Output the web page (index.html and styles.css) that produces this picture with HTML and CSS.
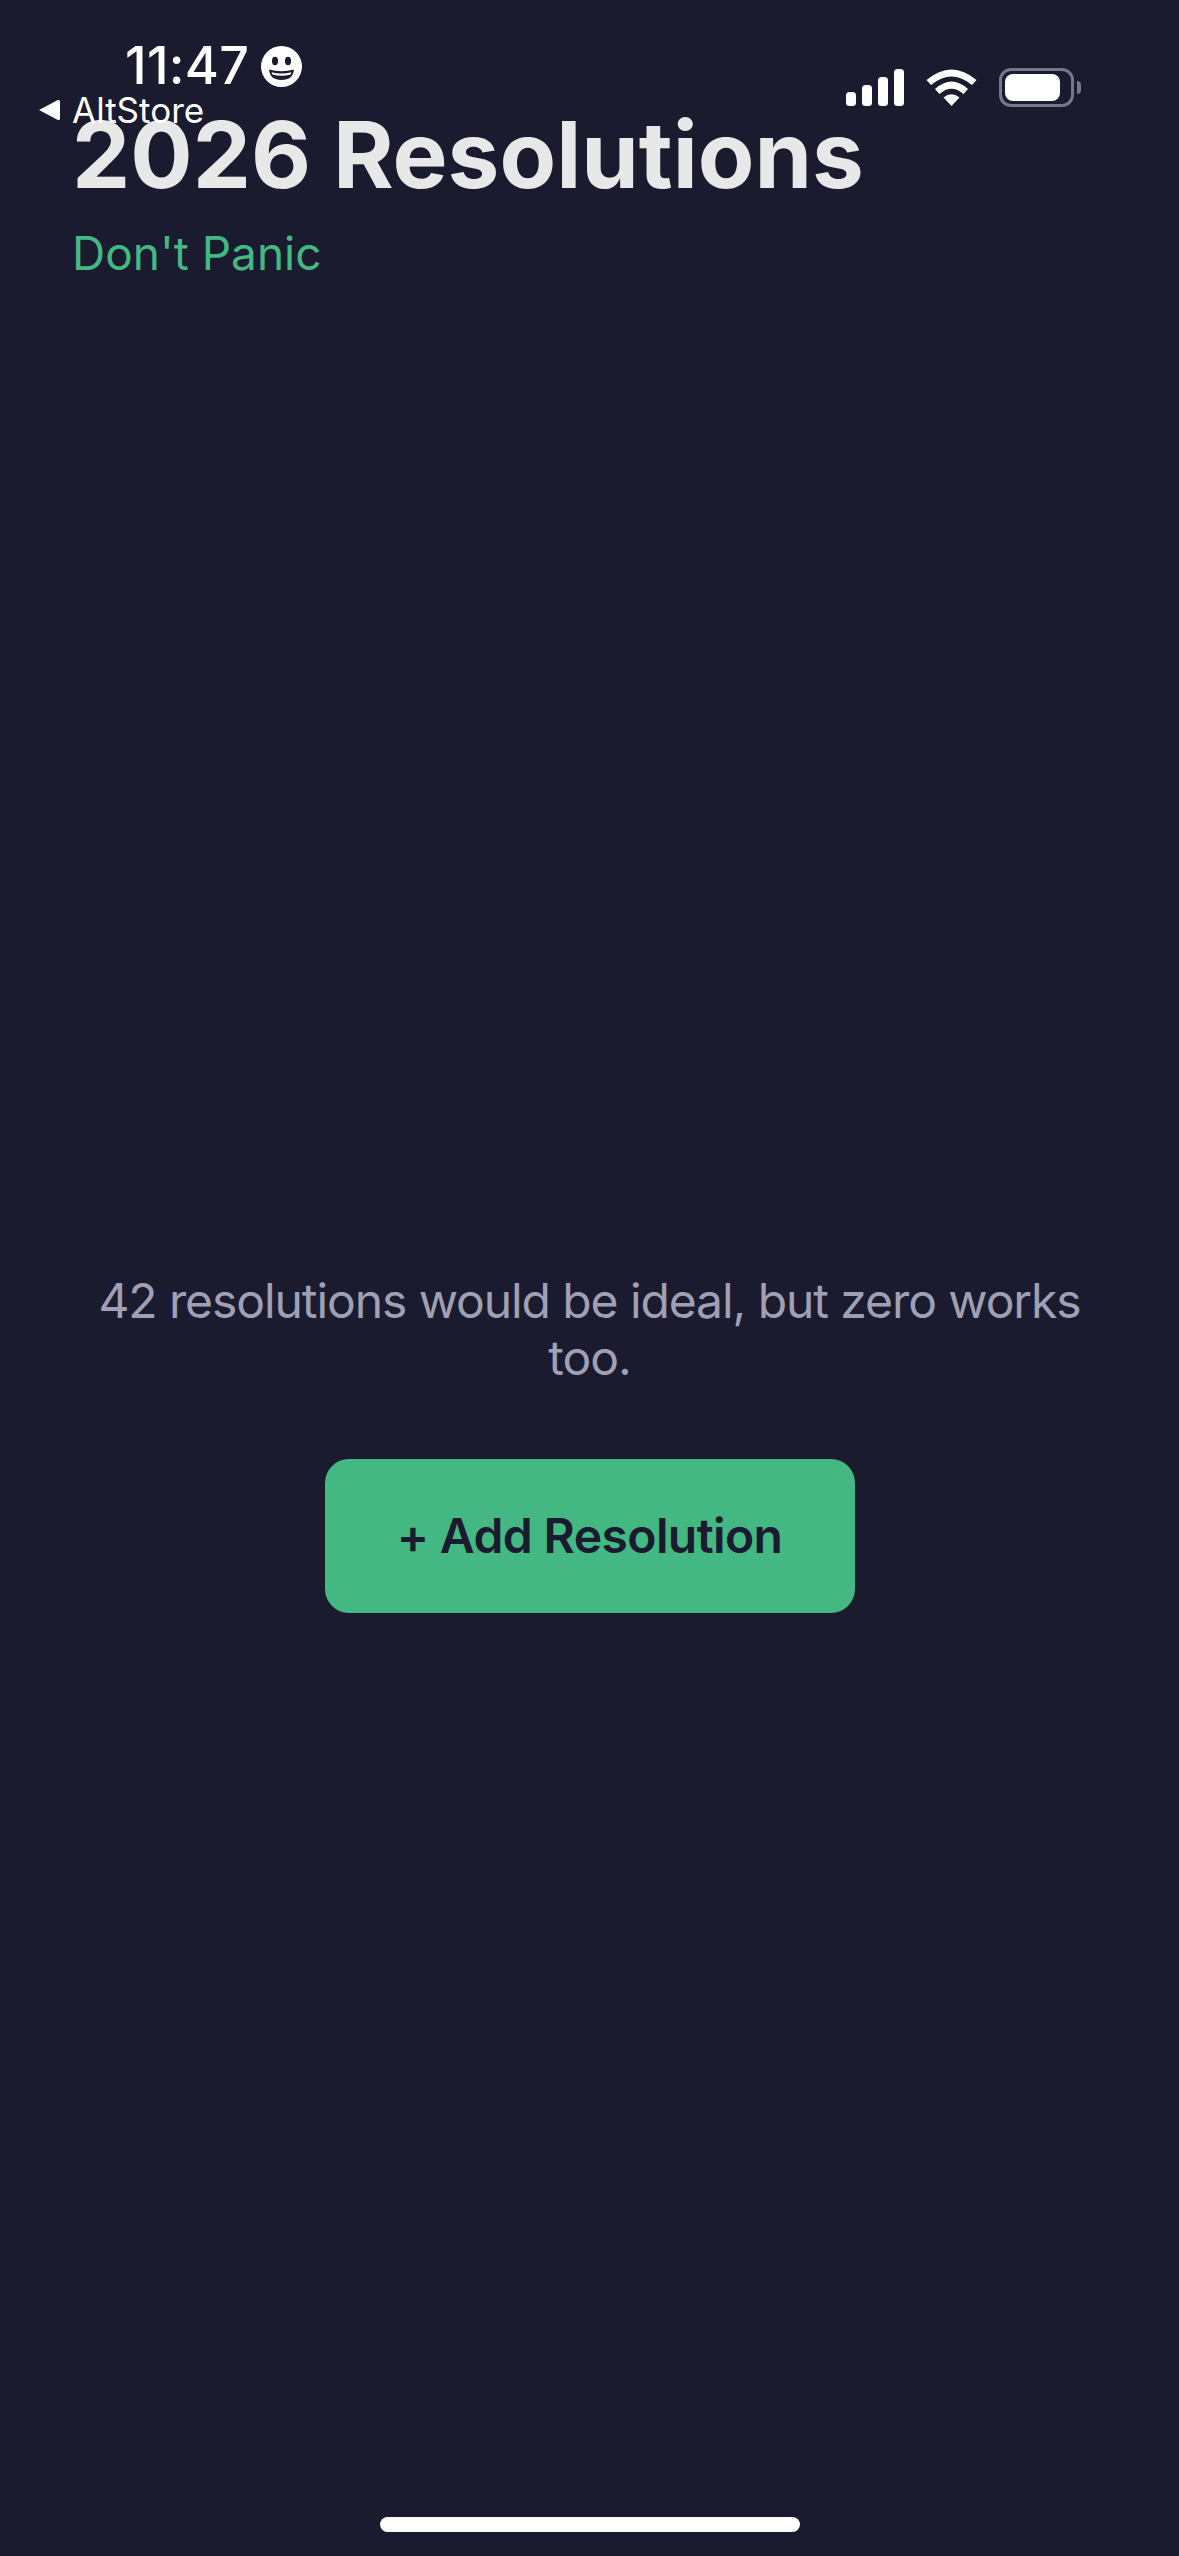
FILE: index.html
```html
<!DOCTYPE html>
<html lang="en">
<head>
    <meta charset="UTF-8">
    <meta name="viewport" content="width=device-width, initial-scale=1.0">
    <title>2026 Resolutions</title>
    <link rel="stylesheet" href="styles.css">
</head>
    <body>
        <div class="phone">
            <!-- Status bar sits over the app content -->
            <div class="status-left">
                <div class="clock">
                    <span class="time">11:47</span>
                    <svg class="focus-icon" width="41" height="41" viewBox="0 0 41 41">
                        <circle cx="20.5" cy="20.5" r="20.5" fill="#fff"/>
                        <ellipse cx="14" cy="15" rx="3" ry="4.2" fill="#1a1b2e"/>
                        <ellipse cx="27" cy="15" rx="3" ry="4.2" fill="#1a1b2e"/>
                        <path d="M8 23.5 Q20.5 27 33 23.5 Q32 34 20.5 34 Q9 34 8 23.5 Z" fill="#1a1b2e"/>
                        <path d="M10.5 26.2 Q20.5 29 30.5 26.2 L29.6 28.6 Q20.5 31 11.4 28.6 Z" fill="#fff"/>
                    </svg>
                </div>
                <div class="back-link">
                    <svg width="22" height="22" viewBox="0 0 21 21">
                        <path d="M1 10.5 L19 1 Q21 0.5 21 2.5 L21 18.5 Q21 20.5 19 20 Z" fill="#fff"/>
                    </svg>
                    <span>AltStore</span>
                </div>
            </div>

            <div class="status-right">
                <svg width="58" height="37" viewBox="0 0 58 37">
                    <rect x="0" y="23" width="10" height="14" rx="3.5" fill="#fff"/>
                    <rect x="16" y="16" width="10" height="21" rx="3.5" fill="#fff"/>
                    <rect x="32" y="8" width="10" height="29" rx="3.5" fill="#fff"/>
                    <rect x="48" y="0" width="10" height="37" rx="3.5" fill="#fff"/>
                </svg>
                <svg width="51" height="37" viewBox="0 0 51 37">
                    <path d="M0.5 11 Q25.5 -10 50.5 11 L46 16 Q25.5 -1 5 16 Z" fill="#fff"/>
                    <path d="M9 20 Q25.5 5 42 20 L37.5 25 Q25.5 14.5 13.5 25 Z" fill="#fff"/>
                    <path d="M17.5 28.5 Q25.5 22 33.5 28.5 L25.5 37 Z" fill="#fff"/>
                </svg>
                <div class="battery">
                    <div class="battery-body">
                        <div class="battery-fill"></div>
                    </div>
                    <div class="battery-cap"></div>
                </div>
            </div>

            <header class="app-header">
                <h1>2026 Resolutions</h1>
                <p class="tagline">Don't Panic</p>
            </header>

            <main class="empty-state">
                <p class="empty-text">42 resolutions would be ideal, but zero works too.</p>
                <button class="add-btn" type="button">+ Add Resolution</button>
            </main>

            <div class="home-bar"></div>
        </div>
    </body>
</html>
```

FILE: styles.css
```css
* {
    box-sizing: border-box;
}

body {
    margin: 0;
    font-family: Inter, "Liberation Sans", sans-serif;
    background-color: #1a1b2e;
}

.phone {
    position: relative;
    display: flex;
    flex-direction: column;
    width: 1179px;
    height: 2556px;
    overflow: hidden;
    background-color: #1a1b2e;
}

.status-left {
    position: absolute;
    top: 41px;
    left: 38px;
    color: #fff;
}

.clock {
    display: flex;
    align-items: center;
    gap: 12px;
    margin-left: 87px;
    height: 50px;
}

.time {
    font-size: 52px;
    font-weight: 500;
    letter-spacing: 0.3px;
    line-height: 50px;
}

.back-link {
    display: flex;
    align-items: center;
    gap: 12px;
    margin-top: -1px;
    font-size: 35px;
    font-weight: 400;
    line-height: 40px;
}

.status-right {
    position: absolute;
    top: 68px;
    left: 846px;
    display: flex;
    align-items: center;
    gap: 22px;
}

.battery {
    display: flex;
    align-items: center;
    gap: 3px;
}

.battery-body {
    width: 75px;
    height: 39px;
    padding: 3px;
    border: 3px solid #77778a;
    border-radius: 12px;
}

.battery-fill {
    width: 55px;
    height: 100%;
    background-color: #fff;
    border-radius: 8px;
}

.battery-cap {
    width: 4px;
    height: 13px;
    background-color: #77778a;
    border-radius: 0 6px 6px 0;
}

.app-header {
    padding: 100px 72px 0;
}

h1 {
    margin: 0;
    font-size: 92.5px;
    font-weight: 700;
    line-height: 108px;
    color: #e8e8e8;
}

.tagline {
    margin: 18px 0 0;
    font-size: 46px;
    line-height: 54px;
    color: #43b883;
}

.empty-state {
    display: flex;
    flex-direction: column;
    align-items: center;
    padding: 992px 60px 0;
}

.empty-text {
    margin: 0;
    font-size: 48px;
    line-height: 57px;
    letter-spacing: -1.08px;
    text-align: center;
    color: #a0a0b4;
}

.add-btn {
    width: 530px;
    height: 154px;
    margin-top: 73px;
    padding-bottom: 3px;
    border: none;
    border-radius: 24px;
    background-color: #43b883;
    color: #1a1b2e;
    font-family: inherit;
    font-size: 48px;
    font-weight: 600;
    letter-spacing: -0.6px;
}

.home-bar {
    position: absolute;
    left: 380px;
    bottom: 24px;
    width: 420px;
    height: 15px;
    background-color: #fff;
    border-radius: 8px;
}
```
